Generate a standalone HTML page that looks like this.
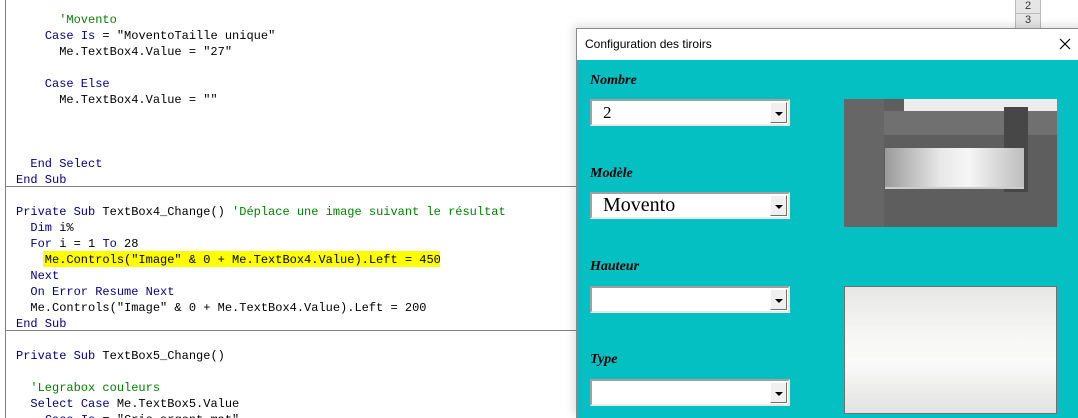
<!DOCTYPE html>
<html><head><meta charset="utf-8"><style>
*{margin:0;padding:0;box-sizing:border-box}
html,body{width:1078px;height:418px;overflow:hidden}
body{background:#fff;position:relative;font-family:"Liberation Mono",monospace}
.l{position:absolute;left:16px;font-size:12px;line-height:16px;height:16px;white-space:pre;color:#000}
.k{color:#00007f}.c{color:#007f00}
.sep{position:absolute;left:5px;width:571px;height:1px;background:#808080}
.dlg{position:absolute;left:576px;top:28px;width:510px;height:390px;border:1px solid #8a8a8a;border-bottom:none;background:#05c0c2;box-shadow:-3px -3px 8px rgba(0,0,0,.12)}
.tb{position:absolute;left:0;top:0;right:0;height:31px;background:#fff;font-family:"Liberation Sans",sans-serif;font-size:12px;color:#000}
.lab{position:absolute;left:13px;font:italic bold 14px "Liberation Serif",serif;color:#000}
.cb{position:absolute;left:13px;width:200px;height:27px;background:#fff;border:2px solid;border-color:#a0a0a0 #e8e8e8 #e8e8e8 #a0a0a0;font-family:"Liberation Serif",serif;color:#000}
.btn{position:absolute;right:1px;top:1px;width:17px;height:21px;background:#f0f0f0;border:1px solid;border-color:#fff #707070 #707070 #fff}
.btn:after{content:"";position:absolute;left:4px;top:9px;border-left:4px solid transparent;border-right:4px solid transparent;border-top:4px solid #000}
</style></head><body>
<div style="position:absolute;left:5px;top:0;width:1px;height:418px;background:#808080"></div>
<div style="position:absolute;left:43px;top:251px;width:397px;height:16px;background:#ffff00"></div>
<div class="l c" style="top:12px">      'Movento</div>
<div class="l" style="top:28px">    <span class="k">Case Is</span> = "MoventoTaille unique"</div>
<div class="l" style="top:44px">      Me.TextBox4.Value = "27"</div>
<div class="l k" style="top:76px">    Case Else</div>
<div class="l" style="top:92px">      Me.TextBox4.Value = ""</div>
<div class="l k" style="top:156px">  End Select</div>
<div class="l k" style="top:172px">End Sub</div>
<div class="sep" style="top:186px"></div>
<div class="l" style="top:204px"><span class="k">Private Sub</span> TextBox4_Change() <span class="c">'Déplace une image suivant le résultat</span></div>
<div class="l" style="top:220px">  <span class="k">Dim</span> i%</div>
<div class="l" style="top:236px">  <span class="k">For</span> i = 1 <span class="k">To</span> 28</div>
<div class="l" style="top:252px">    Me.Controls("Image" &amp; 0 + Me.TextBox4.Value).Left = 450</div>
<div class="l k" style="top:268px">  Next</div>
<div class="l k" style="top:284px">  On Error Resume Next</div>
<div class="l" style="top:300px">  Me.Controls("Image" &amp; 0 + Me.TextBox4.Value).Left = 200</div>
<div class="l k" style="top:316px">End Sub</div>
<div class="sep" style="top:330px"></div>
<div class="l" style="top:348px"><span class="k">Private Sub</span> TextBox5_Change()</div>
<div class="l c" style="top:380px">  'Legrabox couleurs</div>
<div class="l" style="top:396px">  <span class="k">Select Case</span> Me.TextBox5.Value</div>
<div class="l" style="top:412px">    <span class="k">Case Is</span> = "Gris argent mat"</div>
<div style="position:absolute;left:1015px;top:0;width:26px;height:28px;background:#e6e6e6;border-left:1px solid #bbb;border-right:1px solid #bbb;font:11px 'Liberation Sans',sans-serif;text-align:center;color:#333;line-height:13px">2<div style="border-top:1px solid #bbb">3</div></div>
<div class="dlg">
<div class="tb"><span style="position:absolute;left:8px;top:8px">Configuration des tiroirs</span>
<svg style="position:absolute;left:482px;top:9px" width="12" height="12"><path d="M1 1L11 11M11 1L1 11" stroke="#000" stroke-width="1.2"/></svg></div>
<div class="lab" style="top:44px">Nombre</div>
<div class="cb" style="top:70px"><span style="position:absolute;left:11px;top:2px;font-size:17px">2</span><div class="btn"></div></div>
<div class="lab" style="top:137px">Modèle</div>
<div class="cb" style="top:163px"><span style="position:absolute;left:11px;top:0px;font-size:20px">Movento</span><div class="btn"></div></div>
<div class="lab" style="top:230px">Hauteur</div>
<div class="cb" style="top:257px"><div class="btn"></div></div>
<div class="lab" style="top:323px">Type</div>
<div class="cb" style="top:350px"><div class="btn"></div></div>
<div style="position:absolute;left:267px;top:70px;width:213px;height:128px;background:#5e5e5e;overflow:hidden">
<div style="position:absolute;left:60px;top:0;width:153px;height:12px;background:#ececea"></div>
<div style="position:absolute;left:40px;top:12px;width:173px;height:24px;background:#707070"></div>
<div style="position:absolute;left:160px;top:8px;width:24px;height:85px;background:#474747"></div>
<div style="position:absolute;left:41px;top:49px;width:139px;height:41px;background:linear-gradient(90deg,#9a9a9a,#e8e8e8 40%,#f6f6f6 60%,#bdbdbd);border-bottom:2px solid #ccc"></div>
<div style="position:absolute;left:0;top:0;width:40px;height:128px;background:#666"></div>
</div>
<div style="position:absolute;left:267px;top:257px;width:213px;height:128px;border:1px solid #707070;background:linear-gradient(180deg,#e6e6e4,#f7f7f6 40%,#fafafa 60%,#e2e2e0)"></div>
</div>
</body></html>
